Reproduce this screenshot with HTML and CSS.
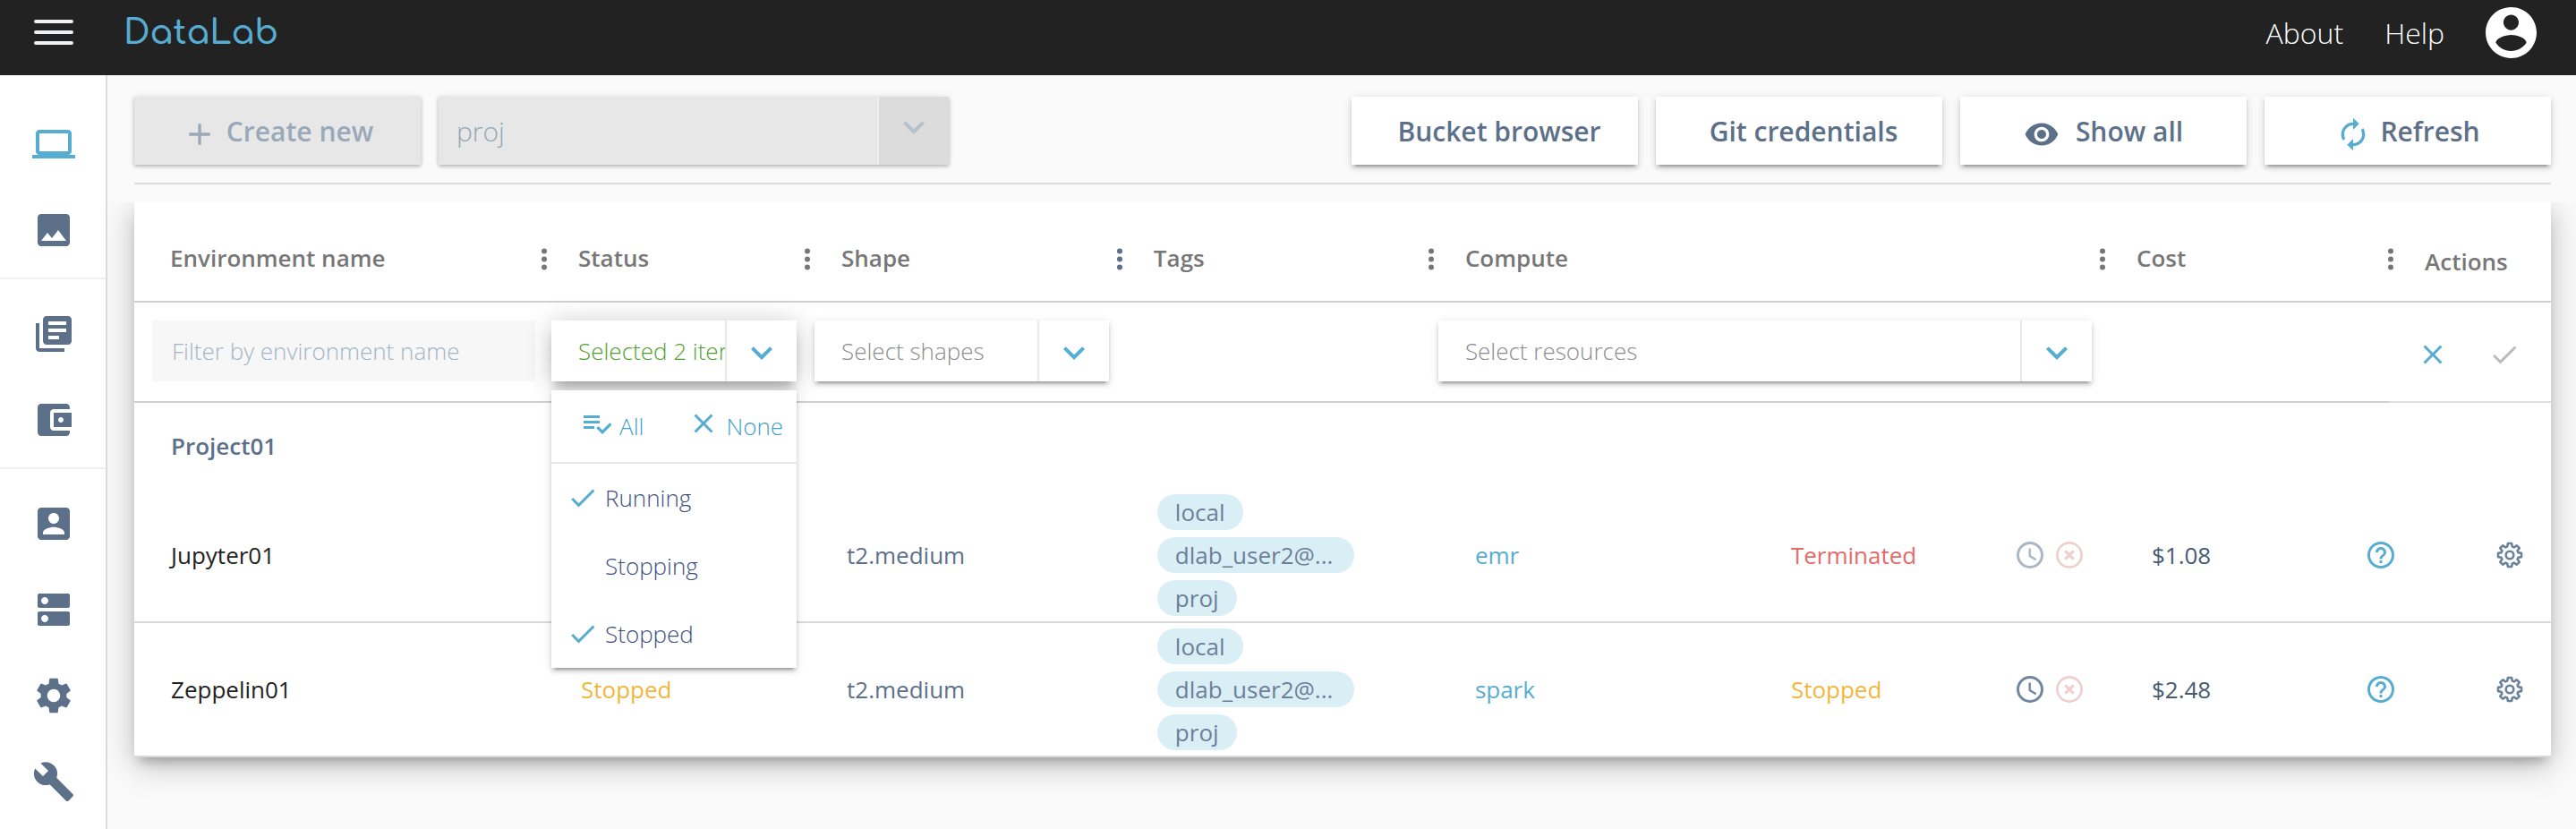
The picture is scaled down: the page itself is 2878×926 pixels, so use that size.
FILE: index.html
```html
<!DOCTYPE html>
<html lang="en">
<head>
<meta charset="utf-8">
<title>DataLab</title>
<link rel="stylesheet" href="styles.css">
</head>
<body>
<svg class="sprite" aria-hidden="true">
  <symbol id="i-more" viewBox="10 3 4 18"><circle cx="12" cy="6" r="2"/><circle cx="12" cy="12" r="2"/><circle cx="12" cy="18" r="2"/></symbol>
  <symbol id="i-chevron" viewBox="0 0 24 24"><path d="M16.59 8.59L12 13.17 7.41 8.59 6 10l6 6 6-6z"/></symbol>
  <symbol id="i-close" viewBox="0 0 24 24"><path d="M19 6.41L17.59 5 12 10.59 6.41 5 5 6.41 10.59 12 5 17.59 6.41 19 12 13.41 17.59 19 19 17.59 13.41 12z"/></symbol>
  <symbol id="i-check" viewBox="0 0 24 24"><path d="M9 16.17L4.83 12l-1.42 1.41L9 19 21 7l-1.41-1.41z"/></symbol>
  <symbol id="i-clock" viewBox="0 0 30 30"><g fill="none" stroke="currentColor"><circle cx="15" cy="15" r="13.5" stroke-width="3"/><path d="M14.700 7.500v8.500l7 4.300" stroke-width="2.400"/></g></symbol>
  <symbol id="i-remove" viewBox="0 0 30 30"><g fill="none" stroke="currentColor"><circle cx="15" cy="15" r="13.600" stroke-width="2.700"/><path d="M10.300 10.300l9.400 9.400M19.700 10.300l-9.400 9.400" stroke-width="3.200"/></g></symbol>
  <symbol id="i-help" viewBox="2 2 20 20"><path d="M11 18h2v-2h-2v2zm1-16C6.480 2 2 6.480 2 12s4.480 10 10 10 10-4.480 10-10S17.520 2 12 2zm0 18c-4.410 0-8-3.590-8-8s3.590-8 8-8 8 3.590 8 8-3.590 8-8 8zm0-14c-2.210 0-4 1.790-4 4h2c0-1.100.9-2 2-2s2 .9 2 2c0 2-3 1.750-3 5h2c0-2.250 3-2.500 3-5 0-2.210-1.790-4-4-4z"/></symbol>
  <symbol id="i-gear" viewBox="0 0 30 30"><g fill="none" stroke="currentColor" stroke-width="2.600" stroke-linejoin="round"><circle cx="15" cy="15" r="4.300"/><path d="M12.900 2h4.200l.7 3.600 2 .8 3-2.100 2.900 2.900-2.100 3 .8 2 3.600.7v4.200l-3.600.7-.8 2 2.100 3-2.900 2.900-3-2.100-2 .8-.7 3.600h-4.200l-.7-3.600-2-.8-3 2.100-2.900-2.900 2.100-3-.8-2-3.600-.7v-4.200l3.600-.7.8-2-2.100-3 2.900-2.900 3 2.100 2-.8z"/></g></symbol>
</svg>

<header class="topbar">
  <button class="menu-btn" type="button" aria-label="Menu"><span></span><span></span><span></span></button>
  <a class="logo" href="#">DataLab</a>
  <nav class="topnav">
    <a href="#">About</a>
    <a href="#">Help</a>
    <button class="avatar" type="button" aria-label="Account"><svg viewBox="2 2 20 20"><path d="M12 2C6.480 2 2 6.480 2 12s4.480 10 10 10 10-4.480 10-10S17.520 2 12 2zm0 3c1.660 0 3 1.340 3 3s-1.340 3-3 3-3-1.340-3-3 1.340-3 3-3zm0 14.200c-2.500 0-4.710-1.280-6-3.220.030-1.990 4-3.080 6-3.080 1.990 0 5.970 1.090 6 3.080-1.290 1.940-3.500 3.220-6 3.220z"/></svg></button>
  </nav>
</header>

<div class="shell">
  <nav class="sidebar" aria-label="Sections">
    <div class="side-group">
      <a class="active" href="#" aria-label="Resources"><svg viewBox="0 0 24 24"><path d="M20 18c1.100 0 1.990-.9 1.990-2L22 6c0-1.100-.9-2-2-2H4c-1.100 0-2 .9-2 2v10c0 1.100.9 2 2 2H0v2h24v-2h-4zM4 6h16v10H4V6z"/></svg></a>
      <a href="#" aria-label="Images"><svg viewBox="0 0 24 24"><path d="M21 19V5c0-1.100-.9-2-2-2H5c-1.100 0-2 .9-2 2v14c0 1.100.9 2 2 2h14c1.100 0 2-.9 2-2zM8.500 13.500l2.500 3.010L14.500 12l4.500 6H5l3.500-4.500z"/></svg></a>
    </div>
    <div class="side-group">
      <a href="#" aria-label="Reports"><svg viewBox="0 0 24 24"><path d="M4 6H2v14c0 1.100.9 2 2 2h14v-2H4V6zm16-4H8c-1.100 0-2 .9-2 2v12c0 1.100.9 2 2 2h12c1.100 0 2-.9 2-2V4c0-1.100-.9-2-2-2zm-1 5H9V5h10v2zm0 4H9V9h10v2zm-4 4H9v-2h6v2z"/></svg></a>
      <a href="#" aria-label="Billing"><svg viewBox="0 0 24 24"><path d="M21 18v1c0 1.100-.9 2-2 2H5c-1.110 0-2-.9-2-2V5c0-1.100.89-2 2-2h14c1.100 0 2 .9 2 2v1h-9c-1.110 0-2 .9-2 2v8c0 1.100.89 2 2 2h9zm-9-2h10V8H12v8zm4-2.500c-.83 0-1.500-.67-1.500-1.500s.67-1.500 1.500-1.500 1.500.67 1.500 1.500-.67 1.500-1.500 1.500z"/></svg></a>
    </div>
    <div class="side-group">
      <a href="#" aria-label="Users"><svg viewBox="0 0 24 24"><path d="M3 5v14c0 1.100.89 2 2 2h14c1.100 0 2-.9 2-2V5c0-1.100-.9-2-2-2H5c-1.110 0-2 .9-2 2zm12 4c0 1.660-1.340 3-3 3s-3-1.340-3-3 1.340-3 3-3 3 1.340 3 3zm-9 8c0-2 4-3.100 6-3.100s6 1.100 6 3.100v1H6v-1z"/></svg></a>
      <a href="#" aria-label="Projects"><svg viewBox="0 0 24 24"><path d="M20 13H4c-.55 0-1 .45-1 1v6c0 .55.45 1 1 1h16c.55 0 1-.45 1-1v-6c0-.55-.45-1-1-1zM7 19c-1.100 0-2-.9-2-2s.9-2 2-2 2 .9 2 2-.9 2-2 2zM20 3H4c-.55 0-1 .45-1 1v6c0 .55.45 1 1 1h16c.55 0 1-.45 1-1V4c0-.55-.45-1-1-1zM7 9c-1.100 0-2-.9-2-2s.9-2 2-2 2 .9 2 2-.9 2-2 2z"/></svg></a>
      <a href="#" aria-label="Settings"><svg viewBox="0 0 24 24"><path d="M19.140 12.940c.04-.3.060-.61.060-.94 0-.32-.02-.64-.07-.94l2.030-1.580c.18-.14.23-.41.120-.61l-1.920-3.320c-.12-.22-.37-.29-.59-.22l-2.390.96c-.5-.38-1.030-.7-1.620-.94L14.400 2.810c-.04-.24-.24-.41-.48-.41h-3.840c-.24 0-.43.17-.47.41L9.250 5.350c-.59.24-1.130.57-1.620.94L5.240 5.330c-.22-.08-.47 0-.59.220L2.740 8.870c-.12.210-.08.470.120.610l2.030 1.580c-.05.3-.09.630-.09.940s.02.64.070.940l-2.030 1.580c-.18.140-.23.410-.12.610l1.920 3.320c.12.220.37.290.59.220l2.390-.96c.5.380 1.030.7 1.620.94l.36 2.540c.05.240.24.410.48.410h3.840c.24 0 .44-.17.470-.41l.36-2.540c.59-.24 1.130-.56 1.620-.94l2.390.96c.22.080.47 0 .59-.22l1.920-3.320c.12-.22.070-.47-.12-.61l-2.010-1.580zM12 15.600c-1.980 0-3.600-1.620-3.600-3.600s1.620-3.600 3.600-3.600 3.600 1.620 3.600 3.600-1.620 3.600-3.600 3.600z"/></svg></a>
      <a href="#" aria-label="Tools"><svg viewBox="0 0 24 24"><path d="M22.700 19l-9.100-9.100c.9-2.300.4-5-1.500-6.900-2-2-5-2.400-7.400-1.300L9 6 6 9 1.600 4.700C.4 7.100.9 10.100 2.900 12.100c1.900 1.900 4.600 2.400 6.900 1.500l9.100 9.100c.4.4 1 .4 1.400 0l2.300-2.300c.5-.4.5-1.100.1-1.400z"/></svg></a>
    </div>
  </nav>

  <main class="content">
    <div class="toolbar">
      <button class="btn" type="button" disabled><svg viewBox="0 0 24 24"><path d="M19 13h-6v6h-2v-6H5v-2h6V5h2v6h6v2z"/></svg>Create new</button>
      <div class="dropdown project-select">
        <select aria-label="Project" disabled><option>proj</option></select>
        <svg><use href="#i-chevron"/></svg>
      </div>
      <div class="toolbar-right">
        <button class="btn plain" type="button">Bucket browser</button>
        <button class="btn plain" type="button">Git credentials</button>
        <button class="btn" type="button"><svg viewBox="0 0 24 24"><path d="M12 4.500C7 4.500 2.730 7.610 1 12c1.730 4.390 6 7.500 11 7.500s9.270-3.110 11-7.500c-1.730-4.390-6-7.500-11-7.500zM12 17c-2.760 0-5-2.240-5-5s2.240-5 5-5 5 2.240 5 5-2.240 5-5 5zm0-8c-1.660 0-3 1.340-3 3s1.340 3 3 3 3-1.340 3-3-1.340-3-3-3z"/></svg>Show all</button>
        <button class="btn refresh" type="button"><svg viewBox="0 0 24 24"><path d="M12 6v3l4-4-4-4v3c-4.420 0-8 3.580-8 8 0 1.570.46 3.030 1.240 4.260L6.700 14.800c-.45-.83-.7-1.790-.7-2.800 0-3.310 2.690-6 6-6zm6.760 1.740L17.300 9.200c.44.840.7 1.790.7 2.800 0 3.310-2.690 6-6 6v-3l-4 4 4 4v-3c4.420 0 8-3.580 8-8 0-1.570-.46-3.030-1.240-4.260z"/></svg>Refresh</button>
      </div>
    </div>

    <div class="card">
      <table class="grid">
        <colgroup><col class="c-name"><col class="c-status"><col class="c-shape"><col class="c-tags"><col class="c-compute"><col class="c-cost"><col class="c-actions"></colgroup>
        <thead>
          <tr class="heads">
            <th scope="col"><div class="head first">Environment name</div></th>
            <th scope="col"><div class="head"><button type="button" aria-label="Status filter"><svg><use href="#i-more"/></svg></button>Status</div></th>
            <th scope="col"><div class="head"><button type="button" aria-label="Shape filter"><svg><use href="#i-more"/></svg></button>Shape</div></th>
            <th scope="col"><div class="head"><button class="lit" type="button" aria-label="Tags filter"><svg><use href="#i-more"/></svg></button>Tags</div></th>
            <th scope="col"><div class="head"><button type="button" aria-label="Compute filter"><svg><use href="#i-more"/></svg></button>Compute</div></th>
            <th scope="col"><div class="head"><button type="button" aria-label="Cost filter"><svg><use href="#i-more"/></svg></button>Cost</div></th>
            <th scope="col"><div class="head"><button type="button" aria-label="Actions filter"><svg><use href="#i-more"/></svg></button><span class="low">Actions</span></div></th>
          </tr>
          <tr class="filters">
            <td class="name-filter"><input type="text" placeholder="Filter by environment name" aria-label="Filter by environment name"></td>
            <td class="status-filter">
              <div class="dropdown open">
                <button class="dropdown-btn" type="button" aria-expanded="true">Selected 2 items</button>
                <svg><use href="#i-chevron"/></svg>
                <div class="menu">
                  <div class="menu-top">
                    <button type="button"><svg viewBox="0 0 24 24"><path d="M14 10H2v2h12v-2zm0-4H2v2h12V6zM2 16h8v-2H2v2zm19.500-4.500L23 13l-6.990 7-4.510-4.500L13 14l3.010 3 5.490-5.500z"/></svg>All</button>
                    <button class="none" type="button"><svg><use href="#i-close"/></svg>None</button>
                  </div>
                  <button class="option" type="button"><svg><use href="#i-check"/></svg>Running</button>
                  <button class="option" type="button">Stopping</button>
                  <button class="option" type="button"><svg><use href="#i-check"/></svg>Stopped</button>
                </div>
              </div>
            </td>
            <td><div class="dropdown"><select aria-label="Shapes"><option>Select shapes</option></select><svg><use href="#i-chevron"/></svg></div></td>
            <td></td>
            <td><div class="dropdown"><select aria-label="Resources"><option>Select resources</option></select><svg><use href="#i-chevron"/></svg></div></td>
            <td></td>
            <td class="filter-actions"><div class="apply"><button type="button" aria-label="Reset filter"><svg><use href="#i-close"/></svg></button><button class="off" type="button" aria-label="Apply filter"><svg><use href="#i-check"/></svg></button></div></td>
          </tr>
        </thead>
        <tbody>
          <tr class="project"><th colspan="7" scope="rowgroup">Project01</th></tr>
          <tr class="env">
            <td class="name">Jupyter01</td>
            <td class="status"></td>
            <td class="shape">t2.medium</td>
            <td class="tags"><div class="chips"><span>local</span><span class="wide">dlab_user2@...</span><span>proj</span></div></td>
            <td class="compute"><div class="resource"><a href="#">emr</a><span class="terminated">Terminated</span><button class="dim" type="button" aria-label="Schedule"><svg><use href="#i-clock"/></svg></button><button class="kill" type="button" aria-label="Terminate"><svg><use href="#i-remove"/></svg></button></div></td>
            <td class="cost"><div class="price">$1.08<button type="button" aria-label="Cost details"><svg><use href="#i-help"/></svg></button></div></td>
            <td class="act"><button type="button" aria-label="Actions"><svg><use href="#i-gear"/></svg></button></td>
          </tr>
          <tr class="env">
            <td class="name">Zeppelin01</td>
            <td class="status">Stopped</td>
            <td class="shape">t2.medium</td>
            <td class="tags"><div class="chips"><span>local</span><span class="wide">dlab_user2@...</span><span>proj</span></div></td>
            <td class="compute"><div class="resource"><a href="#">spark</a><span class="stopped">Stopped</span><button type="button" aria-label="Schedule"><svg><use href="#i-clock"/></svg></button><button class="kill" type="button" aria-label="Terminate"><svg><use href="#i-remove"/></svg></button></div></td>
            <td class="cost"><div class="price">$2.48<button type="button" aria-label="Cost details"><svg><use href="#i-help"/></svg></button></div></td>
            <td class="act"><button type="button" aria-label="Actions"><svg><use href="#i-gear"/></svg></button></td>
          </tr>
        </tbody>
      </table>
    </div>
  </main>
</div>
</body>
</html>
```
FILE: styles.css
```css
:root {
  --blue: #56add1;
  --slate: #5c7089;
  --raise: 0 6px 2px -4px rgba(0, 0, 0, .2), 0 4px 4px rgba(0, 0, 0, .14), 0 2px 10px rgba(0, 0, 0, .12);
  --rest: 0 2px 4px rgba(0, 0, 0, .24), 0 0 8px rgba(0, 0, 0, .08);
}
* { box-sizing: border-box; }
html, body { min-height: 100vh; }
body {
  display: flex;
  flex-direction: column;
  margin: 0;
  background: #fafafa;
  color: var(--slate);
  font: 400 26px/36px "Open Sans", sans-serif;
}
button, input, select { font: inherit; color: inherit; }
button { border: 0; padding: 0; background: none; cursor: pointer; }
a { color: inherit; text-decoration: none; }
svg { display: block; flex: none; fill: currentColor; }
.sprite { position: absolute; width: 0; height: 0; }

/* Top bar */
.topbar {
  display: flex;
  align-items: center;
  height: 84px;
  padding: 0 44px 12px 38px;
  background: #222;
  color: #fff;
}
.menu-btn { display: grid; gap: 8px; width: 44px; }
.menu-btn span { height: 4px; border-radius: 2px; background: #eef0f2; }
.logo {
  margin-left: 56px;
  padding-top: 2px;
  color: var(--blue);
  font: 600 38px/56px Comfortaa, Inter, sans-serif;
  font-feature-settings: "cv11";
}
.topnav {
  display: flex;
  align-items: center;
  gap: 46px;
  margin-left: auto;
  font-size: 32px;
  font-weight: 300;
}
.topnav a { padding-top: 2px; }
.avatar svg { width: 57px; height: 57px; }

/* Sidebar */
.shell { display: flex; flex: 1; }
.sidebar {
  flex: none;
  width: 120px;
  padding-top: 16px;
  border-right: 2px solid #dcdcdc;
  background: #fff;
}
.side-group { padding: 13px 0 5px; border-bottom: 2px solid #edf1f5; }
.side-group:last-child { border: 0; padding-bottom: 0; }
.side-group a { display: grid; place-items: center; height: 96px; }
.side-group svg { width: 48px; height: 48px; margin-left: 2px; }
.side-group .active { color: var(--blue); }

/* Toolbar */
.content { flex: 1; min-width: 0; padding: 24px 28px 0 30px; }
.toolbar {
  display: flex;
  gap: 20px;
  margin-bottom: 20px;
  padding-bottom: 20px;
  border-bottom: 2px solid #dcdcdc;
}
.toolbar-right { display: flex; gap: 20px; margin-left: auto; }
.btn {
  display: flex;
  align-items: center;
  justify-content: center;
  width: 320px;
  height: 76px;
  padding-top: 2px;
  background: #fff;
  box-shadow: var(--raise);
  color: var(--slate);
  font-size: 30px;
  font-weight: 600;
}
.plain { padding-left: 10px; }
.btn svg { width: 40px; height: 40px; margin: 6px 18px 0 0; }
.btn:disabled { background: #e7e7e7; color: #9aa9b9; box-shadow: var(--rest); }
.btn:disabled svg { margin-right: 10px; }
.refresh svg { margin-right: 10px; color: var(--blue); }

/* Drop-downs */
.dropdown {
  position: relative;
  display: grid;
  grid-template-columns: 1fr 80px;
  align-items: center;
  height: 68px;
  background: #fff;
  box-shadow: var(--raise);
}
.dropdown > select,
.dropdown-btn {
  grid-area: 1 / 1 / 2 / 3;
  width: 100%;
  height: 100%;
  padding: 0 80px 0 30px;
  border: 0;
  appearance: none;
  background: none;
  color: #8c8c8c;
  font-weight: 300;
  text-align: left;
}
.dropdown > svg {
  grid-area: 1 / 2 / 2 / 3;
  width: 80px;
  height: 100%;
  padding: 12px 15px 8px;
  border-left: 2px solid #e8e8e8;
  color: var(--blue);
  pointer-events: none;
}
.project-select {
  width: 570px;
  height: 76px;
  background: #e7e7e7;
  box-shadow: var(--rest);
}
.project-select > select { padding-top: 2px; padding-left: 20px; color: #94a6b1; font-size: 30px; opacity: 1; }
.project-select > svg { padding: 10px 15px 18px; border-color: #f0f0f0; background: #dcdcdc; color: #b5c2cb; }
.open { box-shadow: 0 10px 10px -4px rgba(0, 0, 0, .24), 0 4px 30px rgba(0, 0, 0, .24); }
.dropdown > .dropdown-btn {
  grid-area: 1 / 1 / 2 / 2;
  overflow: hidden;
  padding: 0 0 0 30px;
  color: #4f9f30;
  white-space: nowrap;
}

.menu {
  position: absolute;
  z-index: 2;
  top: 78px;
  left: 0;
  right: 0;
  background: #fff;
  box-shadow: var(--raise);
  color: #3d4f80;
  font-weight: 300;
}
.menu-top {
  display: flex;
  justify-content: space-between;
  height: 82px;
  padding: 0 15px 0 33px;
  border-bottom: 2px solid #e8e8e8;
  color: #3fa0c8;
}
.menu-top button { display: flex; align-items: center; gap: 7px; }
.menu-top svg { width: 36px; height: 36px; margin-bottom: 6px; color: var(--blue); }
.option { position: relative; display: block; width: 100%; height: 76px; padding-left: 60px; text-align: left; }
.option svg { position: absolute; top: 20px; left: 17px; width: 36px; height: 36px; color: var(--blue); }

/* Environment table */
.card { background: #fff; box-shadow: 0 10px 12px -6px rgba(0, 0, 0, .24), 0 8px 34px rgba(0, 0, 0, .26); clip-path: inset(0 -60px -80px -60px); }
.grid { width: 100%; border-collapse: separate; border-spacing: 0; table-layout: fixed; }
.grid th, .grid td { padding: 0; border-bottom: 2px solid #d9d9d9; text-align: left; }
.c-name { width: 16.89%; }
.c-status { width: 10.89%; }
.c-shape { width: 12.92%; }
.c-tags { width: 12.89%; }
.c-compute { width: 27.78%; }
.c-cost { width: 11.93%; }
.c-actions { width: 6.7%; }

.heads th { height: 112px; padding-top: 14px; border-color: #d0d0d0; color: #777; font-weight: 600; }
.head { display: flex; align-items: center; gap: 35px; margin-left: -1px; }
.head.first { margin-left: 40px; }
.head svg { width: 6px; height: 27px; margin-top: 2px; }
.head .lit { color: var(--slate); }
.head .low { padding-top: 8px; }

.filters td { height: 112px; padding: 0 10px 2px; border-color: #d0d0d0; }
.filters .name-filter { padding: 0 8px 2px 20px; }
.filters .filter-actions { border-color: #dedede; }
.name-filter input { display: block; width: 100%; height: 68px; padding: 0 22px; border: 0; background: #f7f7f7; font-weight: 300; }
.name-filter input::placeholder { color: #a3b4c6; opacity: 1; }
.apply { display: flex; gap: 44px; padding: 8px 0 0 21px; color: var(--blue); }
.apply svg { width: 36px; height: 36px; }
.apply .off { color: #bbb; }

.grid .project th { height: 96px; padding-left: 41px; border: 0; font-weight: 600; }
.env td { height: 150px; }
.env .name { padding-left: 41px; color: #222; }
.env .status { padding-left: 43px; color: #efb73e; font-weight: 500; }
.env .shape { padding-left: 46px; }
.env .tags { padding-left: 44px; }
.chips { display: flex; flex-direction: column; align-items: flex-start; gap: 8px; }
.chips span { height: 40px; padding: 0 20px; border-radius: 20px; background: #daeef6; color: #6c7f98; line-height: 40px; }
.chips .wide { padding-right: 24px; }
.env .compute { padding: 0 20px 0 51px; }
.resource { display: grid; grid-template-columns: 353px 1fr 30px 44px; align-items: center; }
.resource a { color: var(--blue); }
.resource svg, .price svg, .act svg { width: 30px; height: 30px; }
.resource button { justify-self: end; color: #71879f; }
.resource .kill { color: #f0cfcf; }
.resource .terminated { color: #e56a6a; }
.resource .stopped { color: #efb73e; }
.resource .dim { color: #a9b7c6; }
.env .cost { padding-left: 57px; color: #455a73; }
.price { display: flex; align-items: center; justify-content: space-between; }
.price button { margin-right: -6px; color: var(--blue); }
.env .act { padding-left: 120px; }
.act button { display: block; color: #6b829c; }
```
